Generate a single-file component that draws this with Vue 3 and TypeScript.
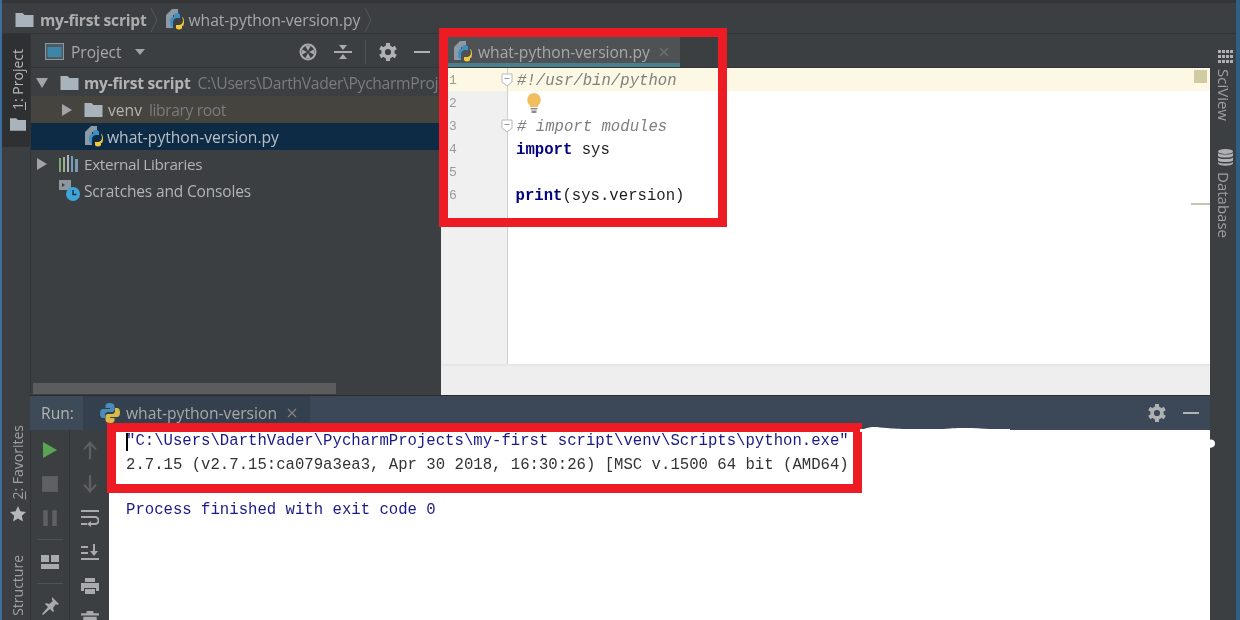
<script setup lang="ts">
const treeRows = [
  { key: 'root', arrow: 'down', icon: 'folder', label: 'my-first script', hint: 'C:\\Users\\DarthVader\\PycharmProj', cls: 'indent-root' },
  { key: 'venv', arrow: 'right', icon: 'folder', label: 'venv', hint: 'library root', cls: 'indent-venv lib' },
  { key: 'file', arrow: '', icon: 'pyfile', label: 'what-python-version.py', hint: '', cls: 'indent-file selected' },
  { key: 'ext', arrow: 'right', icon: 'libs', label: 'External Libraries', hint: '', cls: 'indent-root plain ext' },
  { key: 'scr', arrow: '', icon: 'scratch', label: 'Scratches and Consoles', hint: '', cls: 'indent-scr plain' },
]
const lineNumbers = [1, 2, 3, 4, 5, 6]
const consoleOne = '"C:\\Users\\DarthVader\\PycharmProjects\\my-first script\\venv\\Scripts\\python.exe"'
const consoleTwo = '2.7.15 (v2.7.15:ca079a3ea3, Apr 30 2018, 16:30:26) [MSC v.1500 64 bit (AMD64)'
</script>

<template>
  <div class="ide">
    <svg class="defs" width="0" height="0" aria-hidden="true">
      <symbol id="folder" viewBox="0 0 18 14">
        <path d="M0 0h7l2 2h9v12H0z" fill="#a9b3bb" />
      </symbol>
      <symbol id="pyfile" viewBox="0 0 20 22">
        <path d="M1 6l6-6h6v6H8v13H1z" fill="#8d9aa5" />
        <path d="M8 14c0-4 2-5 5-5h2V6c0-1-1-2-3-2s-3 1-3 2v2H7.500C6 8 5 10 5 13s1 5 3 5z" fill="#3f8fc4" />
        <path d="M19 12c0 4-2 5-5 5h-2v2.500c0 1 1 2 3 2s3-1 3-2V18h.5c1 0 1.500-2 1.500-4.500S19 9 18 9z" fill="#f0c93f" transform="translate(-1 -1)" />
      </symbol>
      <symbol id="py" viewBox="0 0 20 20">
        <path d="M10 0C6 0 5.500 1.500 5.500 3v2H10v1H3C1 6 0 8 0 10.500S1 15 3 15h2v-3c0-2 1.500-3 3-3h4c1.500 0 2.500-1 2.500-2.500V3C14.500 1 12.500 0 10 0z" fill="#4a8bb8" />
        <path d="M10 20c4 0 4.500-1.500 4.500-3v-2H10v-1h7c2 0 3-2 3-4.500S19 5 17 5h-2v3c0 2-1.500 3-3 3H8c-1.500 0-2.500 1-2.500 2.500V17c0 2 2 3 4.500 3z" fill="#d8bb4a" />
      </symbol>
      <symbol id="gear" viewBox="0 0 18 18">
        <circle cx="9" cy="9" r="4.900" fill="none" stroke="#afb1b3" stroke-width="3.600" />
        <g fill="#afb1b3">
          <rect x="7" y="0" width="4" height="4" />
          <rect x="7" y="14" width="4" height="4" />
          <rect x="7" y="0" width="4" height="4" transform="rotate(60 9 9)" />
          <rect x="7" y="14" width="4" height="4" transform="rotate(60 9 9)" />
          <rect x="7" y="0" width="4" height="4" transform="rotate(120 9 9)" />
          <rect x="7" y="14" width="4" height="4" transform="rotate(120 9 9)" />
        </g>
      </symbol>
    </svg>

    <header class="crumbs">
      <svg class="i-crumb-folder"><use href="#folder" /></svg>
      <b class="crumb-root">my-first script</b>
      <svg class="chev first" viewBox="0 0 8 24"><path d="M1 0l6 12-6 12" fill="none" stroke="#55585a" /></svg>
      <svg class="i-py-file"><use href="#pyfile" /></svg>
      <span class="crumb-file">what-python-version.py</span>
      <svg class="chev" viewBox="0 0 8 24"><path d="M1 0l6 12-6 12" fill="none" stroke="#55585a" /></svg>
    </header>

    <div class="body">
      <aside class="strip left">
        <div class="strip-top">
          <div class="strip-active">
            <span class="vlabel"><u>1</u>: Project</span>
            <svg class="i-strip-folder"><use href="#folder" /></svg>
          </div>
        </div>
        <div class="strip-bottom">
          <span class="vlabel fav"><u>2</u>: Favorites</span>
          <svg class="i-star" viewBox="0 0 16 16"><path d="M8 0l2.400 5.300 5.600.6-4.200 3.800 1.200 5.800L8 12.600l-5 2.900 1.200-5.800L0 5.900l5.600-.6z" fill="#b5b7b9" /></svg>
          <span class="vlabel struct">Structure</span>
        </div>
      </aside>

      <div class="center">
        <div class="upper">
          <section class="project">
            <div class="project-head">
              <svg class="i-view" viewBox="0 0 19 17"><rect x=".5" y=".5" width="18" height="16" fill="#4d5a63" stroke="#8d979e" /><rect x="2.500" y="4" width="14" height="10" fill="#3e86a8" /></svg>
              <span class="project-title">Project</span>
              <svg class="caret" viewBox="0 0 10 6"><path d="M0 0h10L5 6z" fill="#a0a2a4" /></svg>
              <span class="grow"></span>
              <svg class="i-target" viewBox="0 0 18 18"><circle cx="9" cy="9" r="7.500" fill="none" stroke="#a8aaac" stroke-width="2" /><path d="M9 8L6.500 3h5zM9 10l2.500 5h-5zM8 9L3 11.500v-5zM10 9l5-2.500v5z" fill="#a8aaac" /></svg>
              <svg class="i-collapse" viewBox="0 0 18 18"><path d="M0 8h18v2H0zM9 7L5 2h8zM9 11l4 5H5z" fill="#a8aaac" /></svg>
              <i class="vsep"></i>
              <svg class="i-gear"><use href="#gear" /></svg>
              <i class="dash"></i>
            </div>
            <ul class="tree">
              <li v-for="row in treeRows" :key="row.key" class="row" :class="row.cls">
                <svg v-if="row.arrow === 'down'" class="arrow" viewBox="0 0 12 12"><path d="M0 1h12L6 11z" fill="#a2a4a6" /></svg>
                <svg v-else-if="row.arrow === 'right'" class="arrow" viewBox="0 0 12 12"><path d="M1 0l10 6-10 6z" fill="#a2a4a6" /></svg>
                <svg v-if="row.icon === 'folder'" class="i-folder"><use href="#folder" /></svg>
                <svg v-else-if="row.icon === 'pyfile'" class="i-py-file tree-py"><use href="#pyfile" /></svg>
                <svg v-else-if="row.icon === 'libs'" class="i-libs" viewBox="0 0 19 17">
                  <path d="M0 3h2v14H0z" fill="#7da874" /><path d="M4 2h2v15H4z" fill="#9fb08c" /><path d="M8 0h2v17H8z" fill="#a9b3bb" /><path d="M12 1h2v16h-2z" fill="#6f9fc0" /><path d="M16 4h3v13h-3z" fill="#7e98ad" />
                </svg>
                <svg v-else class="i-scratch" viewBox="0 0 21 21">
                  <path d="M0 0h12v10H0z" fill="#8d979e" /><path d="M3 3l3 2-3 2z" fill="#3c3f41" />
                  <circle cx="14" cy="14" r="7" fill="#3ea4da" /><path d="M14 10v4.500h3.500" fill="none" stroke="#20303a" stroke-width="1.400" />
                </svg>
                <component :is="row.key === 'root' ? 'b' : 'span'" class="row-label">{{ row.label }}</component>
                <span v-if="row.hint" class="row-hint">{{ row.hint }}</span>
              </li>
            </ul>
            <div class="hscroll-wrap"><div class="hscroll"></div></div>
          </section>

          <section class="editor">
            <div class="tabs">
              <div class="tab">
                <svg class="i-py-file"><use href="#pyfile" /></svg>
                <span>what-python-version.py</span>
                <svg class="x" viewBox="0 0 10 10"><path d="M1 1l8 8M9 1l-8 8" stroke="#6f7173" stroke-width="1.300" /></svg>
              </div>
            </div>
            <div class="code-area">
              <div class="gutter">
                <div v-for="n in lineNumbers" :key="n" class="ln" :class="{ cur: n === 1 }">{{ n }}</div>
              </div>
              <div class="code">
                <svg class="fold f1" viewBox="0 0 12 14"><path d="M1 1h10v8l-5 4-5-4z" fill="#fff" stroke="#b8b8b8" /><path d="M3.500 5.500h5" stroke="#999" /></svg>
                <svg class="fold f3" viewBox="0 0 12 14"><path d="M1 1h10v8l-5 4-5-4z" fill="#fff" stroke="#b8b8b8" /><path d="M3.500 5.500h5" stroke="#999" /></svg>
                <div class="cl cur"><em>#!/usr/bin/python</em></div>
                <div class="cl bulb-line">
                  <svg class="bulb" viewBox="0 0 16 20"><path d="M8 0a7 7 0 0 1 4 12.500V14H4v-1.500A7 7 0 0 1 8 0z" fill="#f2bd5c" /><path d="M4.500 15h7v1.500h-7zM5.500 17.500h5V20h-5z" fill="#8a8d90" /></svg>
                </div>
                <div class="cl"><em># import modules</em></div>
                <div class="cl"><strong>import</strong> sys</div>
                <div class="cl"></div>
                <div class="cl last"><strong class="builtin">print</strong>(sys.version)</div>
                <i class="warn-square"></i>
                <i class="mark-line"></i>
              </div>
            </div>
            <div class="editor-foot"></div>
          </section>
        </div>

        <section class="run">
          <div class="run-head">
            <span class="run-label">Run:</span>
            <div class="run-tab">
              <svg class="i-py"><use href="#py" /></svg>
              <span>what-python-version</span>
              <svg class="x" viewBox="0 0 10 10"><path d="M1 1l8 8M9 1l-8 8" stroke="#7f8183" stroke-width="1.300" /></svg>
            </div>
            <span class="grow"></span>
            <svg class="i-gear"><use href="#gear" /></svg>
            <i class="dash run-dash"></i>
          </div>
          <div class="run-body">
            <div class="tools one">
              <svg class="tool" viewBox="0 0 16 18"><path d="M1 1l14 8-14 8z" fill="#5aa552" /></svg>
              <svg class="tool" viewBox="0 0 16 16"><rect x="1" y="1" width="14" height="14" fill="#5e6062" /></svg>
              <svg class="tool" viewBox="0 0 16 16"><path d="M2 1h4v14H2zM10 1h4v14h-4z" fill="#5e6062" /></svg>
              <i class="tool-sep"></i>
              <svg class="tool" viewBox="0 0 18 14"><path d="M0 0h8v7H0zM10 0h8v7h-8zM0 9h18v5H0z" fill="#a8aaac" /></svg>
              <i class="tool-sep"></i>
              <svg class="tool" viewBox="0 0 18 18"><path d="M11 0l7 7-2 1-1-1-3 4 1 3-1 1-3-3-7 6-1-1 6-7-3-3 1-1 3 1 4-3-1-1z" fill="#a8aaac" /></svg>
            </div>
            <div class="tools two">
              <svg class="tool" viewBox="0 0 14 16"><path d="M7 0l6 7-1.300 1L8 4v12H6V4L2.300 8 1 7z" fill="#5e6062" /></svg>
              <svg class="tool" viewBox="0 0 14 16"><path d="M7 16l6-7-1.300-1L8 12V0H6v12L2.300 8 1 9z" fill="#5e6062" /></svg>
              <svg class="tool" viewBox="0 0 18 16"><path d="M0 0h18v2H0zM0 6h14a4 4 0 0 1 0 9h-4v-2h4a2 2 0 0 0 0-5H0zM0 13h6v2H0z" fill="#a8aaac" /><path d="M10 11v6l-4-3z" fill="#a8aaac" /></svg>
              <svg class="tool" viewBox="0 0 18 16"><path d="M0 2h7v2H0zM0 8h7v2H0zM0 14h18v2H0zM12 0h2v7h3l-4 5-4-5h3z" fill="#a8aaac" /></svg>
              <svg class="tool" viewBox="0 0 18 16"><path d="M4 0h10v4H4zM0 5h18v8h-3v-3H3v3H0zM4 11h10v5H4z" fill="#a8aaac" /></svg>
              <svg class="tool" viewBox="0 0 16 16"><path d="M5 0h6v2h5v2H0V2h5zM2 5h12v11H2z" fill="#a8aaac" /></svg>
            </div>
            <div class="console">
              <div class="cline blue">{{ consoleOne }}<i class="cursor"></i></div>
              <div class="cline dark">{{ consoleTwo }}</div>
              <div class="cline gap"></div>
              <div class="cline blue">Process finished with exit code 0</div>
            </div>
          </div>
        </section>
      </div>

      <aside class="strip right">
        <svg class="i-sci" viewBox="0 0 15 13"><path d="M0 0h3v3H0zM4 0h3v3H4zM8 0h3v3H8zM12 0h3v3h-3zM0 5h3v3H0zM4 5h3v3H4zM8 5h3v3H8zM12 5h3v3h-3zM0 10h3v3H0zM4 10h3v3H4zM8 10h3v3H8zM12 10h3v3h-3z" fill="#afb1b3" /></svg>
        <span class="rlabel sci">SciView</span>
        <svg class="i-db" viewBox="0 0 15 17"><ellipse cx="7.500" cy="2.500" rx="7.500" ry="2.500" fill="#afb1b3" /><path d="M0 4c2 2 13 2 15 0v3c-2 2-13 2-15 0zM0 8.500c2 2 13 2 15 0v3c-2 2-13 2-15 0zM0 13c2 2 13 2 15 0v1.500c-2 3-13 3-15 0z" fill="#afb1b3" /></svg>
        <span class="rlabel db">Database</span>
      </aside>
    </div>

    <div class="redbox box-editor"></div>
    <div class="redbox box-console"></div>
    <svg class="smudge" viewBox="0 0 356 22"><path d="M0 3h4c6-2 10-2.500 16-1.500 10 1 14 1 22 1.500h42c8-1.500 30-1.500 46 0h20v3H0zM348 14c4-1.500 7 0 7 3.500s-3 4.500-7 4.500z" fill="#fff" /></svg>
  </div>
</template>

<style>
html, body { margin: 0; background: #3c3f41; }
</style>

<style scoped>
.ide {
  position: relative;
  width: 1240px;
  height: 620px;
  overflow: hidden;
  display: flex;
  flex-direction: column;
  box-sizing: border-box;
  background: #3c3f41;
  border-left: 2px solid #3b6e9c;
  border-right: 4px solid #2e5f85;
  color: #bbbbbb;
  font-family: "Open Sans", "Liberation Sans", sans-serif;
  filter: blur(0.6px);
}
.defs { position: absolute; }
ul { list-style: none; margin: 0; padding: 0; }
.grow { flex: 1; }

.crumbs {
  height: 34px;
  flex: none;
  box-sizing: border-box;
  padding: 3px 0 0 13px;
  border-top: 3px solid #333537;
  border-bottom: 1px solid #323436;
  display: flex;
  align-items: center;
  font-size: 15.650px;
  color: #adadad;
}
.i-crumb-folder { width: 19px; height: 14px; margin-right: 6px; }
.crumb-root { font-weight: 700; letter-spacing: -0.25px; }
.chev { width: 8px; height: 24px; margin: 0 9px 0 4px; }
.chev.first { margin-right: 7px; }
.i-py-file { width: 20px; height: 22px; margin-right: 3px; flex: none; }
.crumb-file { color: #a9a9a9; letter-spacing: -0.03px; }

.body { flex: 1; min-height: 0; display: flex; }
.strip { flex: none; display: flex; flex-direction: column; align-items: center; box-sizing: border-box; }
.strip.left { width: 28px; justify-content: space-between; }
.strip-top { width: 100%; }
.strip-active {
  height: 113px;
  background: #2e3032;
  display: flex;
  flex-direction: column;
  align-items: center;
  padding: 15px 0 0 3px;
  box-sizing: border-box;
}
.vlabel {
  writing-mode: vertical-rl;
  transform: rotate(180deg);
  font-size: 14px;
  color: #b8b8b8;
  line-height: 18px;
}
.i-strip-folder { width: 16px; height: 13px; margin-top: 8px; }
.strip-bottom { display: flex; flex-direction: column; align-items: center; height: 195px; padding-left: 3px; box-sizing: border-box; overflow: hidden; }
.fav { color: #a0a0a0; flex: none; }
.i-star { width: 16px; height: 16px; margin-top: 6px; flex: none; }
.struct { margin-top: 33px; color: #a0a0a0; flex: none; }

.center { flex: 1; min-width: 0; display: flex; flex-direction: column; }
.upper { height: 361px; flex: none; display: flex; }

.project {
  width: 411px;
  flex: none;
  border-left: 1px solid #323436;
  box-sizing: border-box;
  display: flex;
  flex-direction: column;
  overflow: hidden;
}
.project-head {
  height: 34px;
  flex: none;
  display: flex;
  align-items: center;
  box-sizing: border-box;
  padding: 2px 11px 0 14px;
  border-bottom: 1px solid #323436;
}
.i-view { width: 19px; height: 17px; }
.project-title { font-size: 15.500px; margin-left: 7px; color: #a8a8a8; }
.caret { width: 10px; height: 6px; margin-left: 13px; }
.i-target { width: 18px; height: 18px; margin-right: 17px; }
.i-collapse { width: 18px; height: 18px; }
.vsep { width: 1px; height: 24px; background: #4f5254; margin: 0 13px 0 13px; }
.i-gear { width: 18px; height: 18px; }
.dash { width: 16px; height: 2px; background: #afb1b3; margin-left: 17px; }

.tree { flex: 1; padding-top: 1px; }
.row {
  height: 27px;
  display: flex;
  align-items: center;
  white-space: nowrap;
  font-size: 15.650px;
  color: #b3b3b3;
}
.arrow { width: 12px; height: 12px; flex: none; margin-right: 12px; }
.i-folder { width: 19px; height: 14px; flex: none; margin-right: 5px; }
.indent-root { padding-left: 5px; }
.indent-root.plain .arrow { margin-right: 11px; }
.indent-venv { padding-left: 30px; }
.indent-venv .arrow { margin-right: 11px; }
.indent-file { padding-left: 53px; }
.indent-scr { padding-left: 28px; letter-spacing: -0.15px; font-size: 15.500px; }
.ext { letter-spacing: -0.35px; font-size: 15.300px; }
.lib { background: #45443e; }
.selected { background: #0e2b45; color: #b7c0c8; letter-spacing: -0.03px; }
.tree-py { margin-right: 3px; }
.i-libs { width: 19px; height: 17px; margin-right: 6px; flex: none; }
.i-scratch { width: 21px; height: 21px; margin-right: 4px; flex: none; }
.row-label { color: inherit; }
.indent-root b { letter-spacing: -0.25px; }
.row-hint { margin-left: 7px; color: #7a7c7e; letter-spacing: -0.3px; }
.lib .row-hint { margin-left: 7px; letter-spacing: -0.4px; }
.hscroll-wrap { padding: 0 0 1px 2px; flex: none; }
.hscroll { width: 303px; height: 11px; background: #5a5c5e; }

.editor { flex: 1; min-width: 0; display: flex; flex-direction: column; }
.tabs { height: 34px; flex: none; padding-left: 6px; box-sizing: border-box; border-bottom: 1px solid #323436; }
.tab {
  width: 233px;
  height: 33px;
  box-sizing: border-box;
  padding: 6px 0 0 6px;
  display: flex;
  align-items: center;
  background: #4e5254;
  border-bottom: 4px solid #4a7f8e;
  font-size: 15.650px;
  letter-spacing: -0.03px;
  color: #a8a8a8;
}
.tab .i-py-file { margin-right: 5px; }
.x { width: 10px; height: 10px; margin-left: 9px; flex: none; }
.code-area { flex: 1; min-height: 0; display: flex; background: #fff; }
.gutter {
  width: 58px;
  flex: none;
  background: #f0f0f0;
  border-right: 1px solid #d0d0d0;
  font: 13px/25px "Liberation Mono", monospace;
  color: #9a9a9a;
  padding-left: 8px;
}
.ln { height: 23px; }
.ln.cur { background: #fdf8e4; margin-left: -8px; padding-left: 8px; }
.code {
  position: relative;
  flex: 1;
  font: 15.650px/26px "Liberation Mono", monospace;
  color: #1d1d1d;
  white-space: pre;
}
.cl { height: 23px; padding-left: 8px; }
.cl.last { padding-left: 7.500px; }
.cl.cur { background: #fdf8e4; }
.cl em { color: #7f7f7f; padding-left: 1px; }
.cl strong { color: #000080; }
.cl .builtin { font-weight: 700; color: #000080; }
.bulb-line { padding-left: 18px; display: flex; align-items: center; }
.bulb { width: 16px; height: 20px; }
.fold { position: absolute; left: -7px; width: 12px; height: 14px; z-index: 1; }
.f1 { top: 5px; }
.f3 { top: 51px; }
.warn-square { position: absolute; right: 3px; top: 2px; width: 13px; height: 13px; background: #d1cba4; }
.mark-line { position: absolute; right: 0; top: 135px; width: 19px; height: 2px; background: #c9c5b0; }
.editor-foot { height: 31px; flex: none; background: #eeeeee; border-top: 2px solid #e6e6e6; box-sizing: border-box; }

.run { flex: 1; min-height: 0; display: flex; flex-direction: column; border-top: 1px solid #2b2d2f; }
.run-head {
  height: 34px;
  flex: none;
  box-sizing: border-box;
  padding-right: 11px;
  display: flex;
  align-items: center;
  background: #3c4858;
  font-size: 15.650px;
  color: #a8a8a8;
}
.run-label { width: 53px; box-sizing: border-box; padding-left: 11px; height: 100%; line-height: 34px; background: #3d4a58; color: #b3b3b3; }
.run-tab {
  width: 227px;
  height: 100%;
  box-sizing: border-box;
  padding-left: 17px;
  display: flex;
  align-items: center;
  background: #34404d;
}
.i-py { width: 20px; height: 20px; margin-right: 6px; flex: none; }
.run-tab .x { margin-left: 10px; }
.run-dash { margin-left: 17px; }

.run-body { flex: 1; min-height: 0; display: flex; }
.tools { display: flex; flex-direction: column; align-items: center; flex: none; box-sizing: border-box; }
.tools.one { width: 40px; border-right: 1px solid #323436; border-left: 1px solid #323436; padding-top: 11px; }
.tools.two { width: 39px; padding-top: 11px; }
.tool { width: 18px; height: 18px; margin-bottom: 16px; flex: none; }
.tool-sep { width: 26px; height: 1px; background: #505254; margin: -4px 0 13px; flex: none; }
.console {
  flex: 1;
  background: #fff;
  padding: 0 0 0 17px;
  font: 15.650px/23px "Liberation Mono", monospace;
  white-space: pre;
  overflow: hidden;
}
.cline { height: 23px; position: relative; }
.cline.gap { height: 23px; }
.blue { color: #1a1a86; }
.dark { color: #333; padding-top: 1px; box-sizing: border-box; }
.cursor { position: absolute; left: 0; top: 3px; width: 2px; height: 18px; background: #000; }

.strip.right { width: 26px; padding: 16px 0 0 4px; }
.i-sci { width: 15px; height: 13px; flex: none; }
.rlabel {
  writing-mode: vertical-rl;
  font-size: 15px;
  line-height: 18px;
  color: #a0a0a0;
}
.sci { margin-top: 6px; margin-right: 3px; }
.i-db { width: 15px; height: 17px; margin-top: 28px; flex: none; }
.db { margin-top: 6px; margin-right: 3px; }

.redbox {
  position: absolute;
  box-sizing: border-box;
  border: 9.500px solid #ed1c24;
}
.box-editor { left: 437px; top: 28px; width: 288px; height: 199px; }
.box-console { left: 105px; top: 423px; width: 755px; height: 70px; }
.smudge { position: absolute; left: 858px; top: 426px; width: 356px; height: 22px; }
</style>
